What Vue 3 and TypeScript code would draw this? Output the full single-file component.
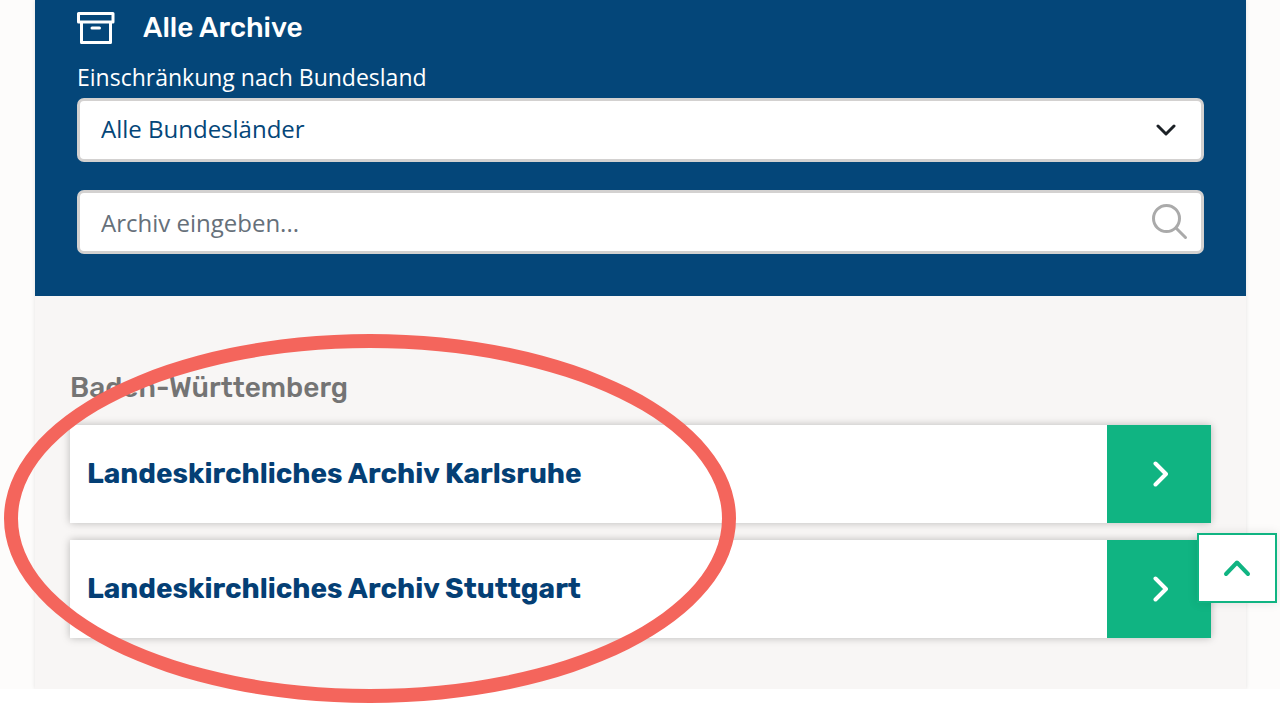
<script setup lang="ts">
import { ref } from 'vue'

interface Archive {
  id: string
  name: string
}

interface Region {
  name: string
  archives: Archive[]
}

const selectedState = ref<string>('')
const query = ref<string>('')

const regions: Region[] = [
  {
    name: 'Baden-Württemberg',
    archives: [
      { id: 'karlsruhe', name: 'Landeskirchliches Archiv Karlsruhe' },
      { id: 'stuttgart', name: 'Landeskirchliches Archiv Stuttgart' },
    ],
  },
]

function scrollToTop(): void {
  window.scrollTo({ top: 0, behavior: 'smooth' })
}
</script>

<template>
  <div class="page">
    <div class="backdrop">
      <main class="panel">
        <header class="filter">
          <div class="title-row">
            <svg class="archive-icon" viewBox="0 0 38 34" aria-hidden="true">
              <path d="M1.500 2.500h34.500v8.500h-34.500zM4.500 11v20.500h29v-20.500M15 17h7.500" />
            </svg>
            <h1 class="title">Alle Archive</h1>
          </div>
          <label class="label" for="state">Einschränkung nach Bundesland</label>
          <div class="field">
            <select id="state" v-model="selectedState" class="control select">
              <option value="">Alle Bundesländer</option>
              <option value="bw">Baden-Württemberg</option>
            </select>
            <svg class="caret" viewBox="0 0 20 12" aria-hidden="true">
              <path d="M2 2l8 8 8-8" />
            </svg>
          </div>
          <form class="field search" role="search" @submit.prevent>
            <input
              v-model="query"
              class="control"
              type="text"
              placeholder="Archiv eingeben..."
              aria-label="Archiv eingeben"
            />
            <button class="search-button" type="submit" aria-label="Suchen">
              <svg viewBox="0 0 36 36" aria-hidden="true">
                <circle cx="14.500" cy="14.500" r="13" />
                <path d="M24 24l9.500 9.500" />
              </svg>
            </button>
          </form>
        </header>

        <section v-for="region in regions" :key="region.name" class="region">
          <h2 class="region-name">{{ region.name }}</h2>
          <ul class="list">
            <li v-for="archive in region.archives" :key="archive.id">
              <a class="card" :href="`#${archive.id}`">
                <span class="card-name">{{ archive.name }}</span>
                <span class="card-arrow">
                  <svg viewBox="0 0 16 26" aria-hidden="true">
                    <path d="M3.500 2.500l10.500 10.500-10.500 10.500" />
                  </svg>
                </span>
              </a>
            </li>
          </ul>
        </section>
      </main>
    </div>

    <button class="to-top" type="button" aria-label="Nach oben" @click="scrollToTop">
      <svg viewBox="0 0 28 18" aria-hidden="true">
        <path d="M3 15l11-11.500 11 11.500" />
      </svg>
    </button>
    <div class="marker" aria-hidden="true"></div>
  </div>
</template>

<style>
body {
  margin: 0;
  background: #fff;
}
</style>

<style scoped>
* {
  box-sizing: border-box;
}

svg {
  display: block;
  fill: none;
  stroke: currentColor;
  stroke-linecap: round;
  stroke-linejoin: round;
}

.page {
  position: relative;
  min-height: 100vh;
  background: #fff;
  font-family: 'Open Sans', 'Noto Sans', sans-serif;
}

.backdrop {
  padding: 0 34px 0 35px;
  background: #fdfcfb;
}

.panel {
  background: #f8f6f5;
  box-shadow: 0 0 4px rgba(0, 0, 0, 0.1);
  clip-path: inset(0 -8px);
}

.filter {
  padding: 8px 42px 42px;
  background: #044679;
  color: #fff;
}

.title-row {
  display: flex;
  align-items: center;
  gap: 28px;
  height: 40px;
}

.archive-icon {
  width: 38px;
  height: 34px;
  stroke-width: 3;
}

.title {
  margin: 0;
  font: 500 28px/40px Rubik, Roboto, sans-serif;
}

.label {
  display: block;
  margin: 12px 0 4px;
  font-size: 23px;
  line-height: 34px;
}

.field {
  position: relative;
}

.search {
  margin-top: 28px;
}

.control {
  display: block;
  width: 100%;
  height: 64px;
  padding: 0 88px 0 21px;
  border: 3px solid #d3d1d0;
  border-radius: 7px;
  outline: none;
  background: #fff;
  color: #66707a;
  font: 400 24px/36px 'Open Sans', 'Noto Sans', sans-serif;
}

.control::placeholder {
  color: #66707a;
  opacity: 1;
}

.select {
  padding-bottom: 2px;
  appearance: none;
  color: #044679;
}

.caret {
  position: absolute;
  top: 26px;
  right: 28px;
  width: 20px;
  height: 12px;
  color: #1c2126;
  stroke-width: 3;
  pointer-events: none;
}

.search-button {
  position: absolute;
  top: 14px;
  right: 16px;
  padding: 0;
  border: 0;
  background: none;
  color: #aaa;
  cursor: pointer;
}

.search-button svg {
  width: 36px;
  height: 36px;
  stroke-width: 3;
}

.region {
  padding: 72px 35px 51px;
}

.region-name {
  margin: 0 0 17px;
  color: #747474;
  font: 500 28px/40px Rubik, Roboto, sans-serif;
}

.list {
  display: flex;
  flex-direction: column;
  gap: 17px;
  margin: 0;
  padding: 0;
  list-style: none;
}

.card {
  display: flex;
  min-height: 98px;
  background: #fff;
  box-shadow: 0 0 8px rgba(0, 0, 0, 0.25);
  color: #043f75;
  text-decoration: none;
}

.card-name {
  flex: 1;
  align-self: center;
  padding: 0 17px;
  font: 700 28px/40px Rubik, Roboto, sans-serif;
}

.card-arrow {
  display: flex;
  align-items: center;
  justify-content: center;
  width: 104px;
  padding-left: 2px;
  background: #10b482;
  color: #fff;
}

.card-arrow svg {
  width: 16px;
  height: 26px;
  stroke-width: 4;
}

.to-top {
  position: absolute;
  top: 533px;
  right: 3px;
  display: flex;
  align-items: center;
  justify-content: center;
  width: 80px;
  height: 70px;
  padding: 0;
  border: 2px solid #10b482;
  background: #fff;
  box-shadow: 0 0 10px rgba(0, 0, 0, 0.1);
  color: #10b482;
  cursor: pointer;
}

.to-top svg {
  width: 28px;
  height: 18px;
  stroke-width: 4;
}

.marker {
  position: absolute;
  top: 334px;
  left: 4px;
  width: 732px;
  height: 369px;
  border: 14px solid #f4655c;
  border-radius: 50%;
  pointer-events: none;
}
</style>
